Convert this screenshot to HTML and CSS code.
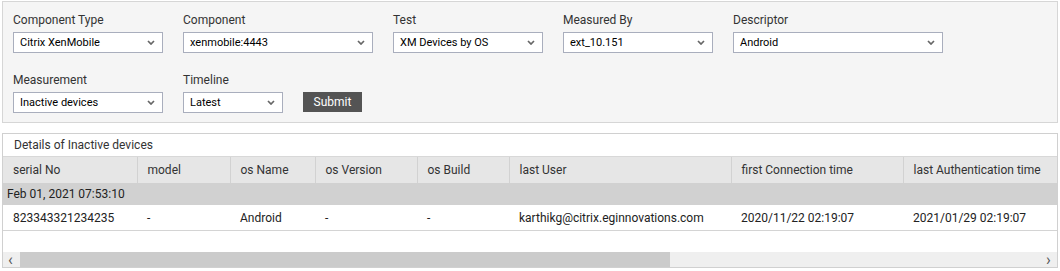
FILE: index.html
```html
<!DOCTYPE html>
<html lang="en">
<head>
  <meta charset="UTF-8">
  <title>Inactive devices</title>
  <link rel="stylesheet" href="styles.css">
</head>
<body>
  <div class="filters">
    <div class="filter-row">
      <div class="field">
        <label>Component Type</label>
        <div class="select w150"><span>Citrix XenMobile</span><svg viewBox="0 0 8 5"><path d="M1 1l3 3 3-3"/></svg></div>
      </div>
      <div class="field">
        <label>Component</label>
        <div class="select w190"><span>xenmobile:4443</span><svg viewBox="0 0 8 5"><path d="M1 1l3 3 3-3"/></svg></div>
      </div>
      <div class="field">
        <label>Test</label>
        <div class="select w150"><span>XM Devices by OS</span><svg viewBox="0 0 8 5"><path d="M1 1l3 3 3-3"/></svg></div>
      </div>
      <div class="field">
        <label>Measured By</label>
        <div class="select w150"><span>ext_10.151</span><svg viewBox="0 0 8 5"><path d="M1 1l3 3 3-3"/></svg></div>
      </div>
      <div class="field">
        <label>Descriptor</label>
        <div class="select w210"><span>Android</span><svg viewBox="0 0 8 5"><path d="M1 1l3 3 3-3"/></svg></div>
      </div>
    </div>
    <div class="filter-row">
      <div class="field">
        <label>Measurement</label>
        <div class="select w150"><span>Inactive devices</span><svg viewBox="0 0 8 5"><path d="M1 1l3 3 3-3"/></svg></div>
      </div>
      <div class="field">
        <label>Timeline</label>
        <div class="select w100"><span>Latest</span><svg viewBox="0 0 8 5"><path d="M1 1l3 3 3-3"/></svg></div>
      </div>
      <div class="field">
        <button class="submit">Submit</button>
      </div>
    </div>
  </div>

  <div class="details">
    <div class="details-title">Details of Inactive devices</div>
    <div class="table-wrap">
      <table>
        <colgroup>
          <col style="width:134px"><col style="width:93px"><col style="width:85px"><col style="width:102px">
          <col style="width:92px"><col style="width:222px"><col style="width:172px"><col style="width:154px">
        </colgroup>
        <thead>
          <tr>
            <th>serial No</th>
            <th>model</th>
            <th>os Name</th>
            <th>os Version</th>
            <th>os Build</th>
            <th>last User</th>
            <th>first Connection time</th>
            <th>last Authentication time</th>
          </tr>
        </thead>
        <tbody>
          <tr class="group"><td colspan="8">Feb 01, 2021 07:53:10</td></tr>
          <tr class="data">
            <td>823343321234235</td>
            <td>-</td>
            <td>Android</td>
            <td>-</td>
            <td>-</td>
            <td>karthikg@citrix.eginnovations.com</td>
            <td>2020/11/22 02:19:07</td>
            <td>2021/01/29 02:19:07</td>
          </tr>
        </tbody>
      </table>
    </div>
    <div class="hscroll">
      <span class="arrow">&lsaquo;</span>
      <div class="track"><div class="thumb"></div></div>
      <span class="arrow">&rsaquo;</span>
    </div>
  </div>
</body>
</html>
```

FILE: styles.css
```css
* {
  box-sizing: border-box;
}

body {
  margin: 1px 2px 0 2px;
  font-family: Roboto, "Liberation Sans", Arial, sans-serif;
  font-size: 12px;
  color: #333;
  background: #fff;
}

.filters {
  background: #f5f5f5;
  border: 1px solid #d6d6d6;
  padding: 10px 10px 8px 10px;
  height: 122px;
}

.filter-row {
  display: flex;
  align-items: flex-end;
  margin-bottom: 19px;
}

.filter-row:last-child {
  margin-bottom: 0;
}

.field {
  margin-right: 20px;
}

label {
  display: block;
  line-height: 16px;
  margin-bottom: 4px;
  color: #333;
  font-size: 12px;
}

.select {
  height: 21px;
  background: #fff;
  border: 1px solid #a9aebd;
  display: flex;
  align-items: center;
  justify-content: space-between;
  padding: 0 7px 0 6px;
  color: #000;
  font-size: 11px;
}

.select svg {
  width: 8px;
  height: 5px;
  fill: none;
  stroke: #666;
  stroke-width: 1.7;
}

.w100 { width: 100px; }
.w150 { width: 150px; }
.w190 { width: 190px; }
.w210 { width: 210px; }

.submit {
  display: block;
  width: 59px;
  height: 20px;
  margin-bottom: 1px;
  background: #545454;
  color: #fff;
  border: none;
  font-family: inherit;
  font-size: 12px;
  padding: 0;
}

.details {
  margin-top: 10px;
  border: 1px solid #d0d0d0;
  background: #fff;
}

.details-title {
  height: 22px;
  line-height: 22px;
  padding-left: 11px;
  font-size: 12px;
  color: #333;
}

.table-wrap {
  overflow: hidden;
  height: 96px;
}

table {
  border-collapse: collapse;
  table-layout: fixed;
  width: 1054px;
}

th {
  height: 26px;
  background: #e6e6e6;
  border-left: 1px solid #d2d2d2;
  border-top: 1px solid #d8d8d8;
  text-align: left;
  font-weight: normal;
  padding: 0 10px;
  color: #333;
  white-space: nowrap;
  font-size: 12px;
}

th:first-child {
  border-left: none;
}

.group td {
  height: 22px;
  background: #d1d1d1;
  padding: 0 0 0 4px;
  color: #222;
  font-size: 12px;
}

.data td {
  height: 26px;
  border-bottom: 1px solid #d4d4d4;
  padding: 1px 10px 0 10px;
  color: #222;
  white-space: nowrap;
  font-size: 12px;
}

.hscroll {
  display: flex;
  align-items: center;
  height: 15px;
  background: #efefef;
}

.arrow {
  width: 17px;
  text-align: center;
  font-size: 16px;
  line-height: 15px;
  color: #555;
}

.arrow:first-child {
  text-align: left;
  padding-left: 5px;
}

.track {
  flex: 1;
  height: 15px;
}

.thumb {
  width: 650px;
  height: 15px;
  background: #cbcbcb;
}
```
